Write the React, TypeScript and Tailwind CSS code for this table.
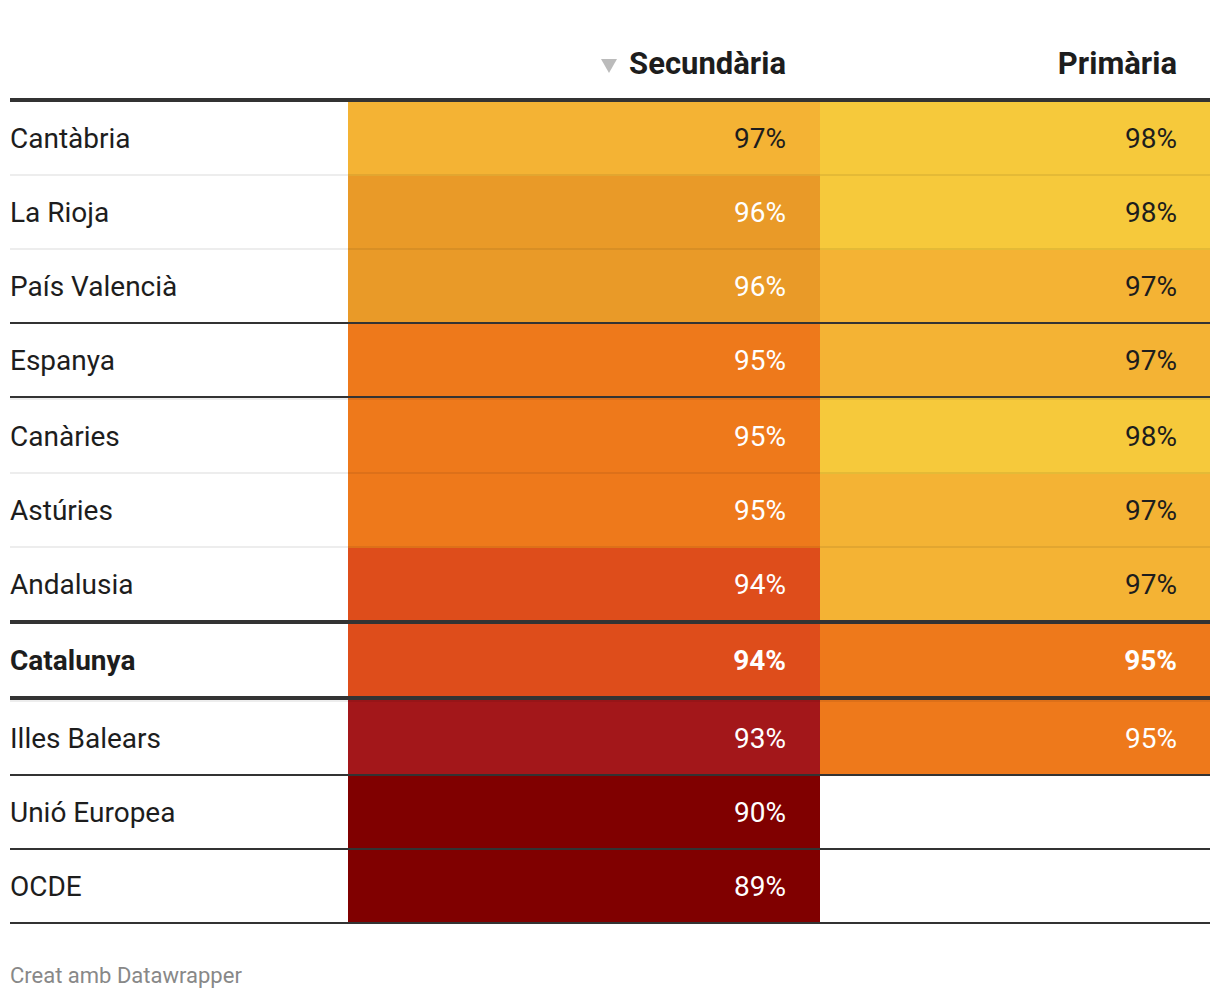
import React from "react";

type Row = {
  name: string;
  s: number;
  p: number | null;
  top?: string;
  bottom: string;
  bold?: boolean;
};

const BG: Record<number, string> = {
  98: "bg-[#f6c93b]",
  97: "bg-[#f4b334]",
  96: "bg-[#e99a28]",
  95: "bg-[#ee791b]",
  94: "bg-[#de4d1b]",
  93: "bg-[#a3171a]",
  90: "bg-[#800000]",
  89: "bg-[#800000]",
};

const LIGHT_B = "border-b-2 border-b-black/[0.07]";
const DARK_B = "border-b-2 border-b-[#333333]";
const THICK_B = "border-b-4 border-b-[#333333]";
const LIGHT_T = "border-t-2 border-t-black/[0.07]";

const rows: Row[] = [
  { name: "Cantàbria", s: 97, p: 98, bottom: LIGHT_B },
  { name: "La Rioja", s: 96, p: 98, bottom: LIGHT_B },
  { name: "País Valencià", s: 96, p: 97, bottom: DARK_B },
  { name: "Espanya", s: 95, p: 97, bottom: DARK_B },
  { name: "Canàries", s: 95, p: 98, top: LIGHT_T, bottom: LIGHT_B },
  { name: "Astúries", s: 95, p: 97, bottom: LIGHT_B },
  { name: "Andalusia", s: 94, p: 97, bottom: THICK_B },
  { name: "Catalunya", s: 94, p: 95, bottom: THICK_B, bold: true },
  { name: "Illes Balears", s: 93, p: 95, top: LIGHT_T, bottom: DARK_B },
  { name: "Unió Europea", s: 90, p: null, bottom: DARK_B },
  { name: "OCDE", s: 89, p: null, bottom: DARK_B },
];

function textColor(v: number) {
  return v >= 97 ? "text-[#1d1d1d]" : "text-white";
}

export default function App() {
  return (
    <div className="w-[1220px] bg-white px-[10px] font-['Roboto','Liberation_Sans',sans-serif] text-[#1d1d1d]">
      <div className="grid grid-cols-[338px_472px_390px] h-[102px] border-b-4 border-b-[#333333]">
        <div />
        <div className="flex items-end justify-end pr-[34px] pb-[16px]">
          <div className="flex items-center gap-[12px]">
            <svg width="16" height="14" viewBox="0 0 16 14" className="mt-[4px]">
              <polygon points="0,0 16,0 8,14" fill="#bbbbbb" />
            </svg>
            <span className="text-[31px] leading-[36px] font-bold">Secundària</span>
          </div>
        </div>
        <div className="flex items-end justify-end pr-[33px] pb-[16px]">
          <span className="text-[31px] leading-[36px] font-bold">Primària</span>
        </div>
      </div>
      {rows.map((r) => {
        const bord = `${r.top ?? ""} ${r.bottom}`;
        const weight = r.bold ? "font-bold" : "font-normal";
        return (
          <div key={r.name} className="grid grid-cols-[338px_472px_390px]">
            <div className={`flex h-full items-center text-[28px] ${weight} ${bord}`}>
              <div className="h-[72px] flex items-center pt-[2px]">{r.name}</div>
            </div>
            <div
              className={`flex items-center justify-end pr-[34px] text-[28px] ${weight} ${BG[r.s]} ${textColor(r.s)} ${bord}`}
            >
              <div className="h-[72px] flex items-center pt-[2px]">{r.s}%</div>
            </div>
            <div
              className={`flex items-center justify-end pr-[33px] text-[28px] ${weight} ${
                r.p !== null ? `${BG[r.p]} ${textColor(r.p)}` : "bg-white"
              } ${bord}`}
            >
              <div className="h-[72px] flex items-center pt-[2px]">{r.p !== null ? `${r.p}%` : ""}</div>
            </div>
          </div>
        );
      })}
      <div className="pt-[38px] pb-[10px] text-[22px] leading-[28px] text-[#888888]">
        Creat amb Datawrapper
      </div>
    </div>
  );
}
